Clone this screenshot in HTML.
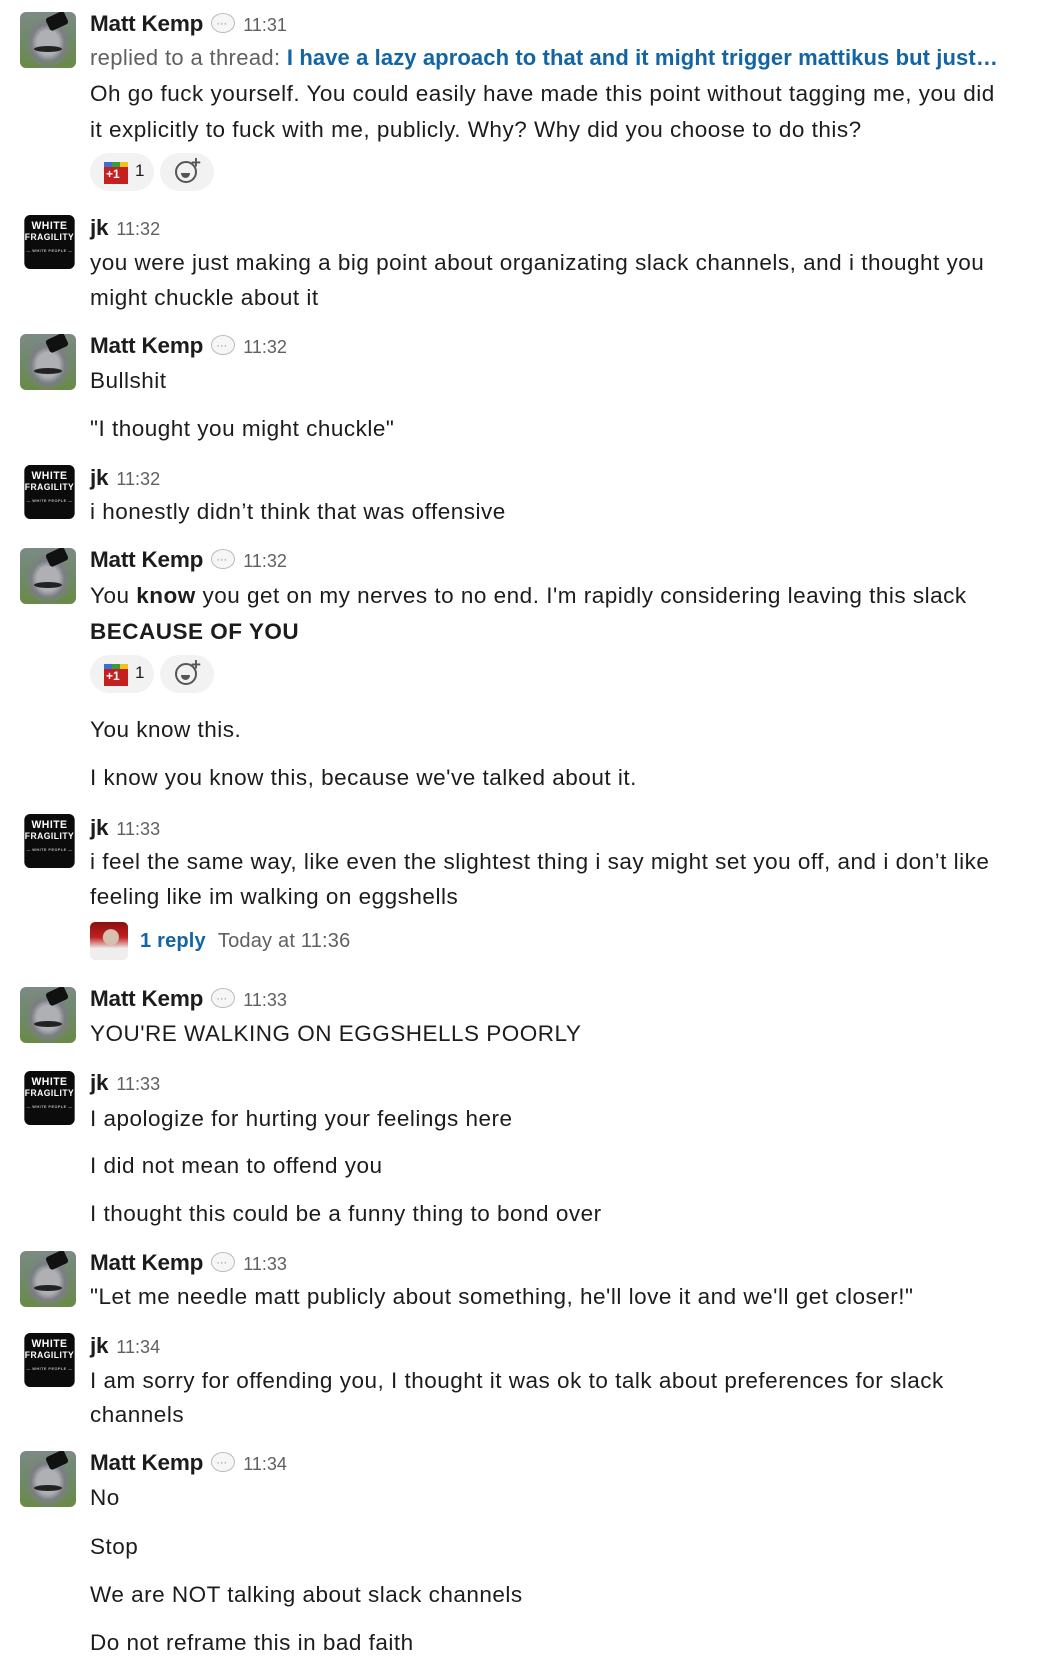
<!DOCTYPE html>
<html><head><meta charset="utf-8"><style>
body{margin:0;width:1038px;height:1676px;background:#fff;position:relative;overflow:hidden;font-family:"Liberation Sans",sans-serif;color:#1d1c1d}
.l{position:absolute;left:90px;font-size:22.5px;letter-spacing:.5px;line-height:30px;white-space:nowrap}
.h{position:absolute;left:90px;font-size:22.5px;line-height:30px;white-space:nowrap}
.h b{font-weight:700;color:#1d1c1d;letter-spacing:-0.2px}
.t{color:#616061;font-size:18px;margin-left:8px}
.bub{display:inline-block;width:22px;height:18px;border:1.5px solid #bbb;border-radius:50%;vertical-align:-2px;margin-left:8px;position:relative;background:#f6f6f6}
.bub:after{content:"···";position:absolute;left:4px;top:-5px;font-size:11px;color:#888}
.av{position:absolute;left:20px;width:56px;height:56px;border-radius:6px;overflow:hidden}
.emu{background:radial-gradient(ellipse at 50% 55%,#aeb0b4 0 28%,#7b7e83 42%,transparent 60%),linear-gradient(#7d8a86 0,#6f8a6a 45%,#6a8a48 100%)}
.emu:before{content:"";position:absolute;left:27px;top:2px;width:20px;height:14px;background:#111;border-radius:3px;transform:rotate(-25deg)}
.emu:after{content:"";position:absolute;left:14px;top:34px;width:28px;height:6px;background:#222;border-radius:50%}
.wf{background:#0b0b0b;color:#fff;font-weight:700;text-align:center;font-size:11px;line-height:12px;padding-top:5px;box-sizing:border-box;letter-spacing:.5px;left:23px;width:53px;height:54px;transform:scaleX(.95)}
.wf i{display:block;font-style:normal;font-size:9px;line-height:11px}
.wf s{display:block;text-decoration:none;font-size:4px;line-height:7px;color:#bbb;margin-top:4px}
.pill{position:absolute;height:38px;border-radius:19px;background:#f2f2f2}
.g1{position:absolute;left:14px;top:9px;width:24px;height:22px;background:#c52020}
.g1:before{content:"";position:absolute;left:0;top:0;width:24px;height:5px;background:linear-gradient(90deg,#3b6fd4 33%,#3a9b3a 33% 66%,#f2c21b 66%)}
.g1:after{content:"+1";position:absolute;left:2px;top:5px;color:#fff;font-size:12px;font-weight:700}
.cnt{position:absolute;left:45px;top:8px;font-size:17px}
.add{position:absolute;left:15px;top:8px;width:22px;height:22px;border:2.5px solid #555;border-radius:50%;box-sizing:border-box}
.add:before{content:"";position:absolute;left:4px;top:10px;width:9px;height:5px;background:#555;border-radius:0 0 6px 6px}
.plus{position:absolute;left:31px;top:0px;font-size:17px;font-weight:700;color:#555}
.link{color:#1264a3;font-weight:700}
</style></head><body>

<div class="av emu" style="top:12px"></div>
<div class="h" style="top:9px"><b>Matt Kemp</b><span class="bub"></span><span class="t">11:31</span></div>
<div class="l" style="top:43px;color:#616061;font-size:22px;letter-spacing:.35px">replied to a thread: <span class="link" style="letter-spacing:.1px">I have a lazy aproach to that and it might trigger mattikus but just…</span></div>
<div class="l" style="top:79px">Oh go fuck yourself. You could easily have made this point without tagging me, you did</div>
<div class="l" style="top:115px">it explicitly to fuck with me, publicly. Why? Why did you choose to do this?</div>
<div class="pill" style="left:90px;top:153px;width:64px"><div class="g1"></div><div class="cnt">1</div></div>
<div class="pill" style="left:160px;top:153px;width:54px"><div class="add"></div><div class="plus">+</div></div>

<div class="av wf" style="top:215px">WHITE<i>FRAGILITY</i><s>— WHITE PEOPLE —</s></div>
<div class="h" style="top:213px"><b>jk</b><span class="t">11:32</span></div>
<div class="l" style="top:248px">you were just making a big point about organizating slack channels, and i thought you</div>
<div class="l" style="top:283px">might chuckle about it</div>

<div class="av emu" style="top:334px"></div>
<div class="h" style="top:331px"><b>Matt Kemp</b><span class="bub"></span><span class="t">11:32</span></div>
<div class="l" style="top:366px">Bullshit</div>
<div class="l" style="top:414px">"I thought you might chuckle"</div>

<div class="av wf" style="top:465px">WHITE<i>FRAGILITY</i><s>— WHITE PEOPLE —</s></div>
<div class="h" style="top:463px"><b>jk</b><span class="t">11:32</span></div>
<div class="l" style="top:497px">i honestly didn’t think that was offensive</div>

<div class="av emu" style="top:548px"></div>
<div class="h" style="top:545px"><b>Matt Kemp</b><span class="bub"></span><span class="t">11:32</span></div>
<div class="l" style="top:581px">You <b>know</b> you get on my nerves to no end. I'm rapidly considering leaving this slack</div>
<div class="l" style="top:617px"><b>BECAUSE OF YOU</b></div>
<div class="pill" style="left:90px;top:655px;width:64px"><div class="g1"></div><div class="cnt">1</div></div>
<div class="pill" style="left:160px;top:655px;width:54px"><div class="add"></div><div class="plus">+</div></div>
<div class="l" style="top:715px">You know this.</div>
<div class="l" style="top:763px">I know you know this, because we've talked about it.</div>

<div class="av wf" style="top:814px">WHITE<i>FRAGILITY</i><s>— WHITE PEOPLE —</s></div>
<div class="h" style="top:813px"><b>jk</b><span class="t">11:33</span></div>
<div class="l" style="top:847px">i feel the same way, like even the slightest thing i say might set you off, and i don’t like</div>
<div class="l" style="top:882px">feeling like im walking on eggshells</div>
<div style="position:absolute;left:90px;top:922px;width:38px;height:38px;border-radius:5px;background:radial-gradient(circle at 55% 40%,#d8c0b0 0 25%,transparent 27%),linear-gradient(#8a1010,#c02020 40%,#eee 70%)"></div>
<div class="l" style="top:926px;font-size:20px;letter-spacing:.2px"><span style="margin-left:50px" class="link">1 reply</span><span style="color:#616061;margin-left:12px">Today at 11:36</span></div>

<div class="av emu" style="top:987px"></div>
<div class="h" style="top:984px"><b>Matt Kemp</b><span class="bub"></span><span class="t">11:33</span></div>
<div class="l" style="top:1019px">YOU'RE WALKING ON EGGSHELLS POORLY</div>

<div class="av wf" style="top:1071px">WHITE<i>FRAGILITY</i><s>— WHITE PEOPLE —</s></div>
<div class="h" style="top:1068px"><b>jk</b><span class="t">11:33</span></div>
<div class="l" style="top:1104px">I apologize for hurting your feelings here</div>
<div class="l" style="top:1151px">I did not mean to offend you</div>
<div class="l" style="top:1199px">I thought this could be a funny thing to bond over</div>

<div class="av emu" style="top:1251px"></div>
<div class="h" style="top:1248px"><b>Matt Kemp</b><span class="bub"></span><span class="t">11:33</span></div>
<div class="l" style="top:1282px">"Let me needle matt publicly about something, he'll love it and we'll get closer!"</div>

<div class="av wf" style="top:1333px">WHITE<i>FRAGILITY</i><s>— WHITE PEOPLE —</s></div>
<div class="h" style="top:1331px"><b>jk</b><span class="t">11:34</span></div>
<div class="l" style="top:1366px">I am sorry for offending you, I thought it was ok to talk about preferences for slack</div>
<div class="l" style="top:1400px">channels</div>

<div class="av emu" style="top:1451px"></div>
<div class="h" style="top:1448px"><b>Matt Kemp</b><span class="bub"></span><span class="t">11:34</span></div>
<div class="l" style="top:1483px">No</div>
<div class="l" style="top:1532px">Stop</div>
<div class="l" style="top:1580px">We are NOT talking about slack channels</div>
<div class="l" style="top:1628px">Do not reframe this in bad faith</div>
</body></html>
